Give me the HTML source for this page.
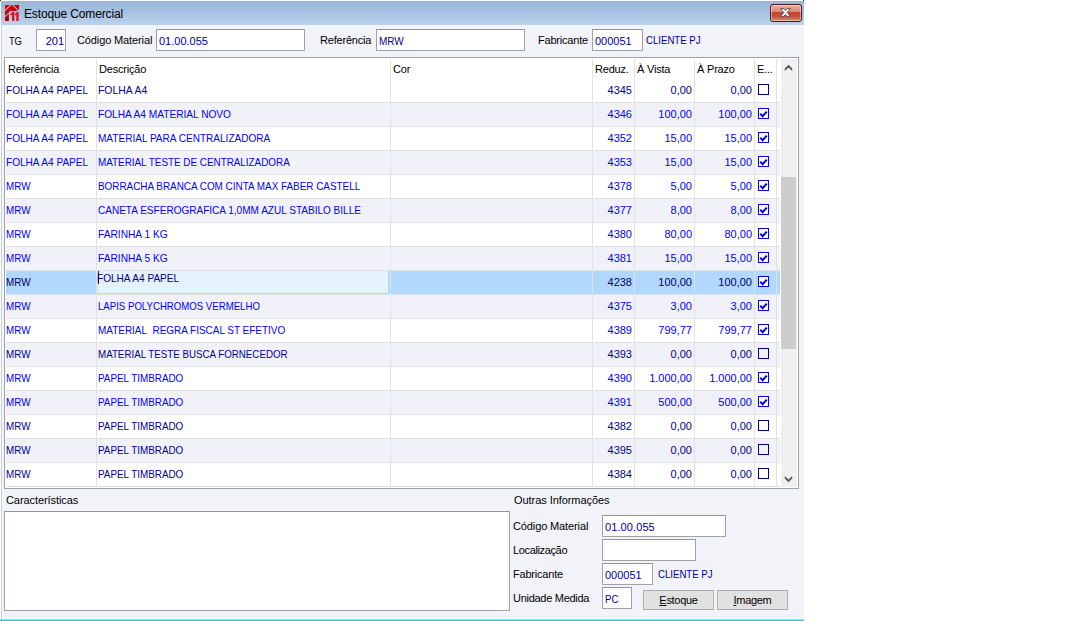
<!DOCTYPE html>
<html lang="pt-BR"><head><meta charset="utf-8"><title>Estoque Comercial</title>
<style>
*{box-sizing:border-box;margin:0;padding:0}
html,body{width:1080px;height:621px;overflow:hidden;background:#fff}
body{position:relative;font-family:"Liberation Sans",sans-serif;font-size:11px;color:#1a1a1a}
.a{position:absolute;white-space:pre}
#win{position:absolute;left:0;top:0;width:804px;height:621px;background:#f2f3f9;overflow:hidden}
#tb{position:absolute;left:1px;top:1px;width:803px;height:24px;background:linear-gradient(#97b4d7,#a9c3e2 55%,#bbd2ec)}
#lb{position:absolute;left:0;top:0;width:1px;height:621px;background:#fff}
#lb2{position:absolute;left:1px;top:25px;width:1px;height:596px;background:#bcd2ec}
#topl{position:absolute;left:0;top:0;width:804px;height:1px;background:#fff}
#bot{position:absolute;left:0;top:619px;width:804px;height:2px;background:linear-gradient(#b4d6ee 50%,#1fc9e0 50%)}
#lb3{position:absolute;left:2px;top:25px;width:1px;height:594px;background:#f9f9fd}
#bl{position:absolute;left:2px;top:618px;width:802px;height:1px;background:#f8f7fc}
.px{position:absolute;top:0;width:1px;height:1px;background:#0c2c36}
#title{left:24px;top:6px;font-size:12px;line-height:16px;color:#000;letter-spacing:-0.14px}
.lbl{line-height:14px;letter-spacing:-0.2px;color:#000}
.inp{position:absolute;height:22px;background:#fff;border:1px solid #a2a2a2;border-top-color:#939393}
.inp span{position:absolute;top:4px;left:2px;line-height:14px;color:#00009c;white-space:pre}
.nv{color:#00009c;line-height:14px;display:inline-block;transform-origin:0 50%;transform:scaleX(.875)}
#grid{position:absolute;left:4px;top:57px;width:795px;height:432px;background:#fff;border:1px solid #a0a0a0}
.row{position:absolute;left:1px;width:774px;height:24px;border-bottom:1px solid #e2e2e2}
.alt{background:#f1f2f9}
.sel{background:#b2d7fd}
.vl{position:absolute;top:1px;width:1px;height:428px;background:#e2e2e2}
.h{position:absolute;top:4px;line-height:14px;letter-spacing:-0.2px;color:#000;white-space:pre}
.c{position:absolute;top:4px;line-height:14px;color:#00f;white-space:pre}
.c1{left:0px;transform-origin:0 50%;transform:scaleX(.916)}
.c2{left:92px;transform-origin:0 50%;transform:scaleX(.907)}
.n{text-align:right}
.n1{right:148px}.n2{right:88px}.n3{right:28px}
.off .c{color:#000094}
.sel .c{color:#00006c}
.sel .cb{background:#e4f0fe}
.cb{position:absolute;left:752px;top:5px;width:11px;height:11px;border:1px solid #00008f}
.cb.on{border-color:#00f;background:#fff}
.cb svg{position:absolute;left:0;top:0}
#edit{position:absolute;left:91px;top:0;width:291px;height:22px;background:#e6f1fe;border-left:1px solid #cfe4fc}
#edit span{position:absolute;left:-1px;top:0px;line-height:14px;color:#00007a;white-space:pre;transform-origin:0 50%;transform:scaleX(.916)}
#caret{position:absolute;left:0px;top:0;width:1px;height:13px;background:#222}
#sb{position:absolute;left:776px;top:1px;width:16px;height:428px;background:#f0f0f0}
#thumb{position:absolute;left:0;top:118px;width:15px;height:172px;background:#cdcdcd}
#ta{position:absolute;left:4px;top:511px;width:506px;height:100px;background:#fff;border:1px solid #a2a2a2;border-top-color:#939393}
.btn{position:absolute;top:590px;height:20px;background:#e1e1e1;border:1px solid #adadad;text-align:center;line-height:18px;color:#000;font-size:11px;letter-spacing:-0.3px}
.btn u{text-decoration:underline}
</style></head>
<body>
<div id="win">
<div id="tb"></div><div id="topl"></div><div id="lb"></div><div id="lb2"></div><div id="lb3"></div><div id="bl"></div><div class="px" style="left:0"></div><div class="px" style="left:803px"></div>
<svg class="a" style="left:5px;top:5px" width="14" height="16" viewBox="0 0 14 16">
<defs><linearGradient id="ig" x1="0" y1="0" x2="0.6" y2="1"><stop offset="0" stop-color="#e20505"/><stop offset="1" stop-color="#9c0000"/></linearGradient></defs>
<path d="M0 0 H14 V4.7 H12.6 L11.6 5.9 H6.4 L3.9 8.4 V16 H0 Z" fill="url(#ig)"/>
<path d="M5.7 0 L0 5.5 M6.1 5.9 L0 11.8 M7.7 0 L12.9 5" stroke="#ecd0d8" stroke-width="1.05" stroke-dasharray="1.3 0.35" fill="none"/>
<path d="M5.2 10.6 V9.2 L7.4 7.1 H9.3 V16 H7.1 V9.6 Z M9.8 10.6 V9.2 L12 7.1 H13.6 V16 H11.3 V9.6 Z" fill="#dc0c10"/>
</svg>
<div class="a" id="title">Estoque Comercial</div>
<div class="a" style="left:770px;top:4px;width:32px;height:18px;border:1px solid #4a1a20;border-radius:3px;background:linear-gradient(#e9aa9b 0%,#dc8a78 45%,#c3432a 46%,#c9553c 75%,#dc8a72 100%);box-shadow:inset 0 0 0 1px rgba(255,255,255,.45)">
<svg style="position:absolute;left:9px;top:3px" width="11" height="9" viewBox="0 0 11 9"><path d="M0.6 0.6 H3.9 L5.5 2.5 L7.1 0.6 H10.4 L7.3 4.5 L10.4 8.4 H7.1 L5.5 6.5 L3.9 8.4 H0.6 L3.7 4.5 Z" fill="#fbfbfb" stroke="#4a4560" stroke-width="0.9" stroke-linejoin="round"/></svg></div>
<div class="a lbl" style="left:9px;top:34px;transform-origin:0 50%;transform:scaleX(.86)">TG</div>
<div class="inp" style="left:36px;top:29px;width:30px"><span style="left:auto;right:1px">201</span></div>
<div class="a lbl" style="left:77px;top:33px;letter-spacing:-0.12px">Código Material</div>
<div class="inp" style="left:156px;top:29px;width:149px"><span>01.00.055</span></div>
<div class="a lbl" style="left:320px;top:33px">Referência</div>
<div class="inp" style="left:376px;top:29px;width:149px"><span style="transform-origin:0 50%;transform:scaleX(.905)">MRW</span></div>
<div class="a lbl" style="left:538px;top:33px">Fabricante</div>
<div class="inp" style="left:592px;top:29px;width:51px"><span>000051</span></div>
<div class="a nv" style="left:646px;top:33px">CLIENTE PJ</div>
<div id="grid">
<div class="row off" style="top:21px"><span class="c c1">FOLHA A4 PAPEL</span><span class="c c2" style="transform:scaleX(0.946)">FOLHA A4</span><span class="c n n1">4345</span><span class="c n n2">0,00</span><span class="c n n3">0,00</span><div class="cb"></div></div>
<div class="row alt" style="top:45px"><span class="c c1">FOLHA A4 PAPEL</span><span class="c c2" style="transform:scaleX(0.922)">FOLHA A4 MATERIAL NOVO</span><span class="c n n1">4346</span><span class="c n n2">100,00</span><span class="c n n3">100,00</span><div class="cb on"><svg width="9" height="9" viewBox="0 0 9 9"><path d="M1.3 4.6 L3.6 7.2 L7.8 2.6" stroke="#00f" stroke-width="2" fill="none"/></svg></div></div>
<div class="row" style="top:69px"><span class="c c1">FOLHA A4 PAPEL</span><span class="c c2" style="transform:scaleX(0.913)">MATERIAL PARA CENTRALIZADORA</span><span class="c n n1">4352</span><span class="c n n2">15,00</span><span class="c n n3">15,00</span><div class="cb on"><svg width="9" height="9" viewBox="0 0 9 9"><path d="M1.3 4.6 L3.6 7.2 L7.8 2.6" stroke="#00f" stroke-width="2" fill="none"/></svg></div></div>
<div class="row alt" style="top:93px"><span class="c c1">FOLHA A4 PAPEL</span><span class="c c2" style="transform:scaleX(0.897)">MATERIAL TESTE DE CENTRALIZADORA</span><span class="c n n1">4353</span><span class="c n n2">15,00</span><span class="c n n3">15,00</span><div class="cb on"><svg width="9" height="9" viewBox="0 0 9 9"><path d="M1.3 4.6 L3.6 7.2 L7.8 2.6" stroke="#00f" stroke-width="2" fill="none"/></svg></div></div>
<div class="row" style="top:117px"><span class="c c1" style="transform:scaleX(.895)">MRW</span><span class="c c2" style="transform:scaleX(0.9)">BORRACHA BRANCA COM CINTA MAX FABER CASTELL</span><span class="c n n1">4378</span><span class="c n n2">5,00</span><span class="c n n3">5,00</span><div class="cb on"><svg width="9" height="9" viewBox="0 0 9 9"><path d="M1.3 4.6 L3.6 7.2 L7.8 2.6" stroke="#00f" stroke-width="2" fill="none"/></svg></div></div>
<div class="row alt" style="top:141px"><span class="c c1" style="transform:scaleX(.895)">MRW</span><span class="c c2" style="transform:scaleX(0.912)">CANETA ESFEROGRAFICA 1,0MM AZUL STABILO BILLE</span><span class="c n n1">4377</span><span class="c n n2">8,00</span><span class="c n n3">8,00</span><div class="cb on"><svg width="9" height="9" viewBox="0 0 9 9"><path d="M1.3 4.6 L3.6 7.2 L7.8 2.6" stroke="#00f" stroke-width="2" fill="none"/></svg></div></div>
<div class="row" style="top:165px"><span class="c c1" style="transform:scaleX(.895)">MRW</span><span class="c c2" style="transform:scaleX(0.926)">FARINHA 1 KG</span><span class="c n n1">4380</span><span class="c n n2">80,00</span><span class="c n n3">80,00</span><div class="cb on"><svg width="9" height="9" viewBox="0 0 9 9"><path d="M1.3 4.6 L3.6 7.2 L7.8 2.6" stroke="#00f" stroke-width="2" fill="none"/></svg></div></div>
<div class="row alt" style="top:189px"><span class="c c1" style="transform:scaleX(.895)">MRW</span><span class="c c2" style="transform:scaleX(0.926)">FARINHA 5 KG</span><span class="c n n1">4381</span><span class="c n n2">15,00</span><span class="c n n3">15,00</span><div class="cb on"><svg width="9" height="9" viewBox="0 0 9 9"><path d="M1.3 4.6 L3.6 7.2 L7.8 2.6" stroke="#00f" stroke-width="2" fill="none"/></svg></div></div>
<div class="row sel" style="top:213px"><span class="c c1" style="transform:scaleX(.895)">MRW</span><div id="edit"><div id="caret"></div><span>FOLHA A4 PAPEL</span></div><span class="c n n1">4238</span><span class="c n n2">100,00</span><span class="c n n3">100,00</span><div class="cb on"><svg width="9" height="9" viewBox="0 0 9 9"><path d="M1.3 4.6 L3.6 7.2 L7.8 2.6" stroke="#00f" stroke-width="2" fill="none"/></svg></div></div>
<div class="row alt" style="top:237px"><span class="c c1" style="transform:scaleX(.895)">MRW</span><span class="c c2" style="transform:scaleX(0.875)">LAPIS POLYCHROMOS VERMELHO</span><span class="c n n1">4375</span><span class="c n n2">3,00</span><span class="c n n3">3,00</span><div class="cb on"><svg width="9" height="9" viewBox="0 0 9 9"><path d="M1.3 4.6 L3.6 7.2 L7.8 2.6" stroke="#00f" stroke-width="2" fill="none"/></svg></div></div>
<div class="row" style="top:261px"><span class="c c1" style="transform:scaleX(.895)">MRW</span><span class="c c2" style="transform:scaleX(0.904)">MATERIAL&nbsp; REGRA FISCAL ST EFETIVO</span><span class="c n n1">4389</span><span class="c n n2">799,77</span><span class="c n n3">799,77</span><div class="cb on"><svg width="9" height="9" viewBox="0 0 9 9"><path d="M1.3 4.6 L3.6 7.2 L7.8 2.6" stroke="#00f" stroke-width="2" fill="none"/></svg></div></div>
<div class="row alt off" style="top:285px"><span class="c c1" style="transform:scaleX(.895)">MRW</span><span class="c c2" style="transform:scaleX(0.887)">MATERIAL TESTE BUSCA FORNECEDOR</span><span class="c n n1">4393</span><span class="c n n2">0,00</span><span class="c n n3">0,00</span><div class="cb"></div></div>
<div class="row" style="top:309px"><span class="c c1" style="transform:scaleX(.895)">MRW</span><span class="c c2" style="transform:scaleX(0.896)">PAPEL TIMBRADO</span><span class="c n n1">4390</span><span class="c n n2">1.000,00</span><span class="c n n3">1.000,00</span><div class="cb on"><svg width="9" height="9" viewBox="0 0 9 9"><path d="M1.3 4.6 L3.6 7.2 L7.8 2.6" stroke="#00f" stroke-width="2" fill="none"/></svg></div></div>
<div class="row alt" style="top:333px"><span class="c c1" style="transform:scaleX(.895)">MRW</span><span class="c c2" style="transform:scaleX(0.896)">PAPEL TIMBRADO</span><span class="c n n1">4391</span><span class="c n n2">500,00</span><span class="c n n3">500,00</span><div class="cb on"><svg width="9" height="9" viewBox="0 0 9 9"><path d="M1.3 4.6 L3.6 7.2 L7.8 2.6" stroke="#00f" stroke-width="2" fill="none"/></svg></div></div>
<div class="row off" style="top:357px"><span class="c c1" style="transform:scaleX(.895)">MRW</span><span class="c c2" style="transform:scaleX(0.896)">PAPEL TIMBRADO</span><span class="c n n1">4382</span><span class="c n n2">0,00</span><span class="c n n3">0,00</span><div class="cb"></div></div>
<div class="row alt off" style="top:381px"><span class="c c1" style="transform:scaleX(.895)">MRW</span><span class="c c2" style="transform:scaleX(0.896)">PAPEL TIMBRADO</span><span class="c n n1">4395</span><span class="c n n2">0,00</span><span class="c n n3">0,00</span><div class="cb"></div></div>
<div class="row off" style="top:405px"><span class="c c1" style="transform:scaleX(.895)">MRW</span><span class="c c2" style="transform:scaleX(0.896)">PAPEL TIMBRADO</span><span class="c n n1">4384</span><span class="c n n2">0,00</span><span class="c n n3">0,00</span><div class="cb"></div></div>
<span class="h" style="left:3px">Referência</span><span class="h" style="left:94px">Descrição</span><span class="h" style="left:388px">Cor</span><span class="h" style="left:590px">Reduz.</span><span class="h" style="left:632px">À Vista</span><span class="h" style="left:692px">À Prazo</span><span class="h" style="left:752px">E...</span>
<div class="vl" style="left:91px"></div><div class="vl" style="left:385px"></div><div class="vl" style="left:587px"></div><div class="vl" style="left:629px"></div><div class="vl" style="left:689px"></div><div class="vl" style="left:749px"></div><div class="vl" style="left:771px"></div>
<div id="sb"><div id="thumb"></div><svg style="position:absolute;left:0;top:0" width="16" height="428" viewBox="0 0 16 428"><path d="M7.5 5.8 L11.2 9.5 V12 L7.5 8.6 L3.8 12 V9.5 Z M7.5 423.2 L11.2 419.5 V417 L7.5 420.4 L3.8 417 V419.5 Z" fill="#555"/></svg></div>
</div>
<div class="a lbl" style="left:6px;top:493px;letter-spacing:-0.08px">Características</div>
<div id="ta"></div>
<div class="a lbl" style="left:514px;top:493px;letter-spacing:-0.06px">Outras Informações</div>
<div class="a lbl" style="left:513px;top:519px;letter-spacing:-0.12px">Código Material</div>
<div class="inp" style="left:602px;top:515px;width:124px"><span style="left:2px;letter-spacing:.1px">01.00.055</span></div>
<div class="a lbl" style="left:513px;top:543px;letter-spacing:-0.36px">Localização</div>
<div class="inp" style="left:602px;top:539px;width:94px"></div>
<div class="a lbl" style="left:513px;top:567px">Fabricante</div>
<div class="inp" style="left:602px;top:563px;width:51px"><span style="left:2px">000051</span></div>
<div class="a nv" style="left:658px;top:567px">CLIENTE PJ</div>
<div class="a lbl" style="left:513px;top:591px;letter-spacing:-0.28px">Unidade Medida</div>
<div class="inp" style="left:602px;top:587px;width:30px"><span style="left:2px;transform-origin:0 50%;transform:scaleX(.87)">PC</span></div>
<div class="btn" style="left:643px;width:71px"><u>E</u>stoque</div>
<div class="btn" style="left:717px;width:71px"><u>I</u>magem</div>
<div id="bot"></div>
</div>
</body></html>
